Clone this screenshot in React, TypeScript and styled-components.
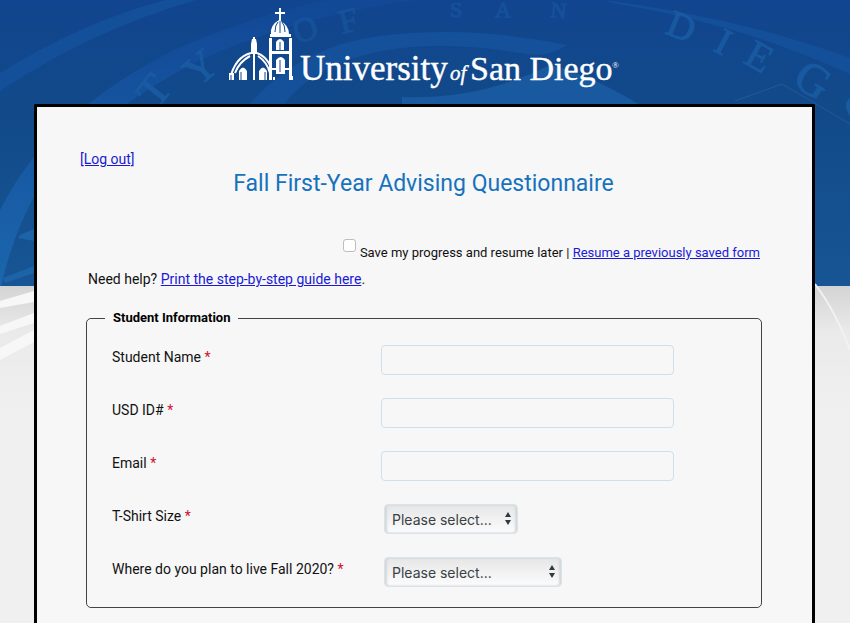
import React from "react";
import styled, { createGlobalStyle } from "styled-components";

const GlobalStyle = createGlobalStyle`
  *, *::before, *::after { box-sizing: border-box; }
  body {
    margin: 0;
    background: #f0f0f0;
    color: #111;
    font-family: Roboto, "Liberation Sans", sans-serif;
    font-size: 14px;
    line-height: 20px;
  }
`;

const Page = styled.div`
  position: relative;
  display: flex;
  flex-direction: column;
  min-height: 100vh;
`;

const Backdrop = styled.svg`
  position: absolute;
  inset: 0;
  z-index: -1;
  width: 100%;
  height: 100%;
`;

const Header = styled.header`
  display: flex;
  justify-content: center;
  height: 104px;
`;

const Logo = styled.svg`
  display: block;
  width: 400px;
  height: 104px;
  fill: #fff;
`;

const Card = styled.main`
  flex: 1;
  margin: 0 35px 0 34px;
  padding: 42px 43px 12px;
  background: #f7f7f7;
  border: 3px solid #000;
  border-bottom: 0;
  border-radius: 2px 2px 0 0;
`;

const Link = styled.a`
  color: #1a1ad6;
  text-decoration: underline;
`;

const Title = styled.h1`
  margin: 0;
  padding-right: 2px;
  color: #1672bd;
  font-size: 23px;
  font-weight: 400;
  line-height: 30px;
  text-align: center;
`;

const Progress = styled.div`
  display: flex;
  justify-content: flex-end;
  gap: 4px;
  margin-top: 39px;
  padding-right: 9px;
  font-size: 13px;
`;

const SaveBox = styled.input`
  appearance: none;
  width: 13px;
  height: 13px;
  margin: 1px 0 0;
  background: #fff;
  border: 1px solid #bdbdbd;
  border-radius: 3px;
`;

const ProgressText = styled.span`
  padding-top: 5px;
`;

const Help = styled.p`
  margin: 6px 8px 0;
`;

const Group = styled.fieldset`
  margin: 19px 7px 0 6px;
  padding: 17px 26px 20px 18px;
  border: 1px solid #444;
  border-radius: 5px;
`;

const Legend = styled.legend`
  padding: 0 8px;
  color: #000;
  font-size: 13px;
  font-weight: 700;
`;

const Row = styled.div`
  display: grid;
  grid-template-columns: 269px minmax(0, 1fr);
  align-items: start;
  margin-left: 7px;

  & + & {
    margin-top: 23px;
  }
`;

const Label = styled.label`
  padding-top: 2px;
`;

const Required = styled.span`
  color: #d0102f;
`;

const TextInput = styled.input`
  width: 100%;
  max-width: 293px;
  height: 30px;
  padding: 0 8px;
  background: #f7f7f7;
  border: 1px solid #cfdfec;
  border-radius: 4px;
  font: inherit;
`;

const SelectBox = styled.div<{ $width: number }>`
  position: relative;
  width: ${(p) => p.$width}px;
  margin-left: 3px;
`;

const Select = styled.select`
  appearance: none;
  display: block;
  width: 100%;
  height: 30px;
  padding: 0 7px;
  background: linear-gradient(#e6e6e6, #fcfcfc);
  border: 1px solid #dce3e8;
  border-radius: 4px;
  box-shadow: inset 2px 0 2px #d2d8dc, inset -2px 0 2px #d2d8dc;
  color: #3a4145;
  font-family: Inter, "Liberation Sans", sans-serif;
  font-size: 14px;
`;

const Arrows = styled.svg`
  position: absolute;
  top: 8px;
  right: 6px;
  width: 8px;
  height: 13px;
  fill: #2f3a3e;
  pointer-events: none;
`;

const textFields = [
  { id: "student-name", label: "Student Name" },
  { id: "usd-id", label: "USD ID#" },
  { id: "email", label: "Email" },
];

const selectFields = [
  { id: "shirt-size", label: "T-Shirt Size", width: 134 },
  { id: "residence", label: "Where do you plan to live Fall 2020?", width: 178 },
];

const sealLetters = [
  { char: "T", x: 157, y: 110, turn: -52, size: 44 },
  { char: "Y", x: 198, y: 88, turn: -40, size: 42 },
  { char: "O", x: 297, y: 44, turn: -18, size: 34 },
  { char: "F", x: 342, y: 34, turn: -14, size: 34 },
  { char: "S", x: 450, y: 17, turn: 0, size: 22 },
  { char: "A", x: 495, y: 17, turn: 2, size: 22 },
  { char: "N", x: 550, y: 17, turn: 6, size: 22 },
  { char: "D", x: 664, y: 33, turn: 22, size: 38 },
  { char: "I", x: 712, y: 50, turn: 28, size: 38 },
  { char: "E", x: 742, y: 62, turn: 30, size: 40 },
  { char: "G", x: 791, y: 84, turn: 32, size: 46 },
];

function SealBackdrop() {
  return (
    <Backdrop viewBox="0 0 850 623" preserveAspectRatio="xMidYMin slice" aria-hidden="true">
      <defs>
        <linearGradient id="sky" x1="0" y1="0" x2="0" y2="1">
          <stop offset="0" stopColor="#11458f" />
          <stop offset="0.4" stopColor="#124a89" />
          <stop offset="1" stopColor="#175595" />
        </linearGradient>
        <linearGradient id="band" x1="0" y1="0" x2="0" y2="1">
          <stop offset="0" stopColor="#124896" />
          <stop offset="1" stopColor="#1b66ad" />
        </linearGradient>
        <linearGradient id="stone" x1="0" y1="0" x2="0" y2="1">
          <stop offset="0" stopColor="#d4d4d4" />
          <stop offset="0.35" stopColor="#eaeaea" />
          <stop offset="1" stopColor="#f0f0f0" />
        </linearGradient>
        <clipPath id="top">
          <rect width="850" height="286" />
        </clipPath>
      </defs>
      <rect width="850" height="286" fill="url(#sky)" />
      <g clipPath="url(#top)">
        <path
          d="M0 73Q82 22 165 0H196Q92 30 0 91ZM605 0Q740 18 850 58V74Q735 22 612 3Z"
          fill="#14509a"
        />
        <path
          d="M88 104Q155 52 230 28Q275 11 328 0H415Q330 12 270 33Q190 58 124 106L60 160Q20 205 1 286H0V210Q30 150 88 104Z"
          fill="url(#band)"
        />
        <path d="M250 104Q300 46 380 36Q470 25 567 45Q548 59 520 53Q440 40 382 51Q315 64 284 104Z" fill="#14519a" />
        <path d="M402 104V97Q480 100 550 65Q595 76 648 110H402Z" fill="#18599f" />
        <path d="M735 101L782 84L850 124" fill="none" stroke="#245995" />
        <path d="M850 98Q842 104 850 116Z" fill="#1a5ca4" />
        <path d="M18 238L34 241V229L20 235ZM3 278L34 266V273L5 283Z" fill="#1d63a7" />
        <g fill="#1a5ca4" stroke="#1a5ca4" fontFamily="Liberation Serif, serif">
          {sealLetters.map((l) => (
            <text
              key={l.x}
              fontSize={l.size}
              opacity={l.y < 45 && l.x < 600 ? 0.5 : 0.85}
              transform={`translate(${l.x} ${l.y}) rotate(${l.turn})`}
            >
              {l.char}
            </text>
          ))}
        </g>
      </g>
      <rect y="286" width="850" height="130" fill="url(#stone)" />
      <path d="M0 301L34 291V302L0 308ZM0 326L34 313V323L0 334ZM0 348L34 330V342L0 360Z" fill="#f7f7f7" />
      <path d="M815 284Q835 310 850 350" fill="none" stroke="#f2f2f2" strokeWidth="2" />
    </Backdrop>
  );
}

function UniversityLogo() {
  return (
    <Logo viewBox="225 0 400 104" role="img" aria-label="University of San Diego">
      <path d="M279 8h2v4h4v2h-4v7h-2v-7h-4v-2h4ZM271 34Q270 25 279 20Q289 25 289 34Z" />
      <path d="M275 32Q275 25 278 22M280 21V33M285 32Q285 25 282 22" fill="none" stroke="#16498a" />
      <path d="M270 34h21v3h-21ZM269 38h3v42h-3ZM289 38h3v42h-3ZM270 51h22v3h-22ZM270 68h22v2h-22ZM276 50v-8q4-6 8 0v8ZM276 74V60q5-6 9 0v14Z" />
      <path d="M280 42v8M280 60v12" stroke="#16498a" />
      <path d="M251 54V44l1-5h1v-2h2v2h1l1 5v10h-2v26h-2V54Z" />
      <path
        d="M251 53Q235 57 230 79M250 56Q239 62 235 73M257 53Q266 56 271 67M258 56Q267 62 270 73"
        fill="none"
        stroke="#fff"
        strokeWidth="2"
      />
      <path d="M229 73h5v7h-5ZM239 80V71q4-7 8 0v9ZM259 80V71q4-7 8 0v9ZM273 77h2v3h-2ZM290 76h3v4h-3Z" />
      <path d="M241 72v8M265 72v8M231 75v5" stroke="#16498a" />
      <g fontFamily="Liberation Serif, serif" stroke="#fff" strokeWidth="0.4">
        <text x="300" y="80" fontSize="35">University</text>
        <text x="450" y="80" fontSize="21" fontStyle="italic">of</text>
        <text x="470" y="80" fontSize="34">San Diego</text>
      </g>
      <text x="612" y="68" fontFamily="Liberation Serif, serif" fontSize="9">®</text>
    </Logo>
  );
}

export default function App() {
  return (
    <>
      <GlobalStyle />
      <Page>
        <SealBackdrop />
        <Header>
          <UniversityLogo />
        </Header>
        <Card>
          <Link href="#logout">[Log out]</Link>
          <Title>Fall First-Year Advising Questionnaire</Title>
          <Progress>
            <SaveBox id="save-progress" type="checkbox" />
            <ProgressText>
              <label htmlFor="save-progress">Save my progress and resume later</label> |{" "}
              <Link href="#resume">Resume a previously saved form</Link>
            </ProgressText>
          </Progress>
          <Help>
            Need help? <Link href="#guide">Print the step-by-step guide here</Link>.
          </Help>
          <Group>
            <Legend>Student Information</Legend>
            {textFields.map((f) => (
              <Row key={f.id}>
                <Label htmlFor={f.id}>
                  {f.label} <Required>*</Required>
                </Label>
                <TextInput id={f.id} type="text" required />
              </Row>
            ))}
            {selectFields.map((f) => (
              <Row key={f.id}>
                <Label htmlFor={f.id}>
                  {f.label} <Required>*</Required>
                </Label>
                <SelectBox $width={f.width}>
                  <Select id={f.id} required>
                    <option>Please select...</option>
                  </Select>
                  <Arrows viewBox="0 0 8 13" aria-hidden="true">
                    <path d="M4 0L7 5H1ZM1 8H7L4 13Z" />
                  </Arrows>
                </SelectBox>
              </Row>
            ))}
          </Group>
        </Card>
      </Page>
    </>
  );
}
